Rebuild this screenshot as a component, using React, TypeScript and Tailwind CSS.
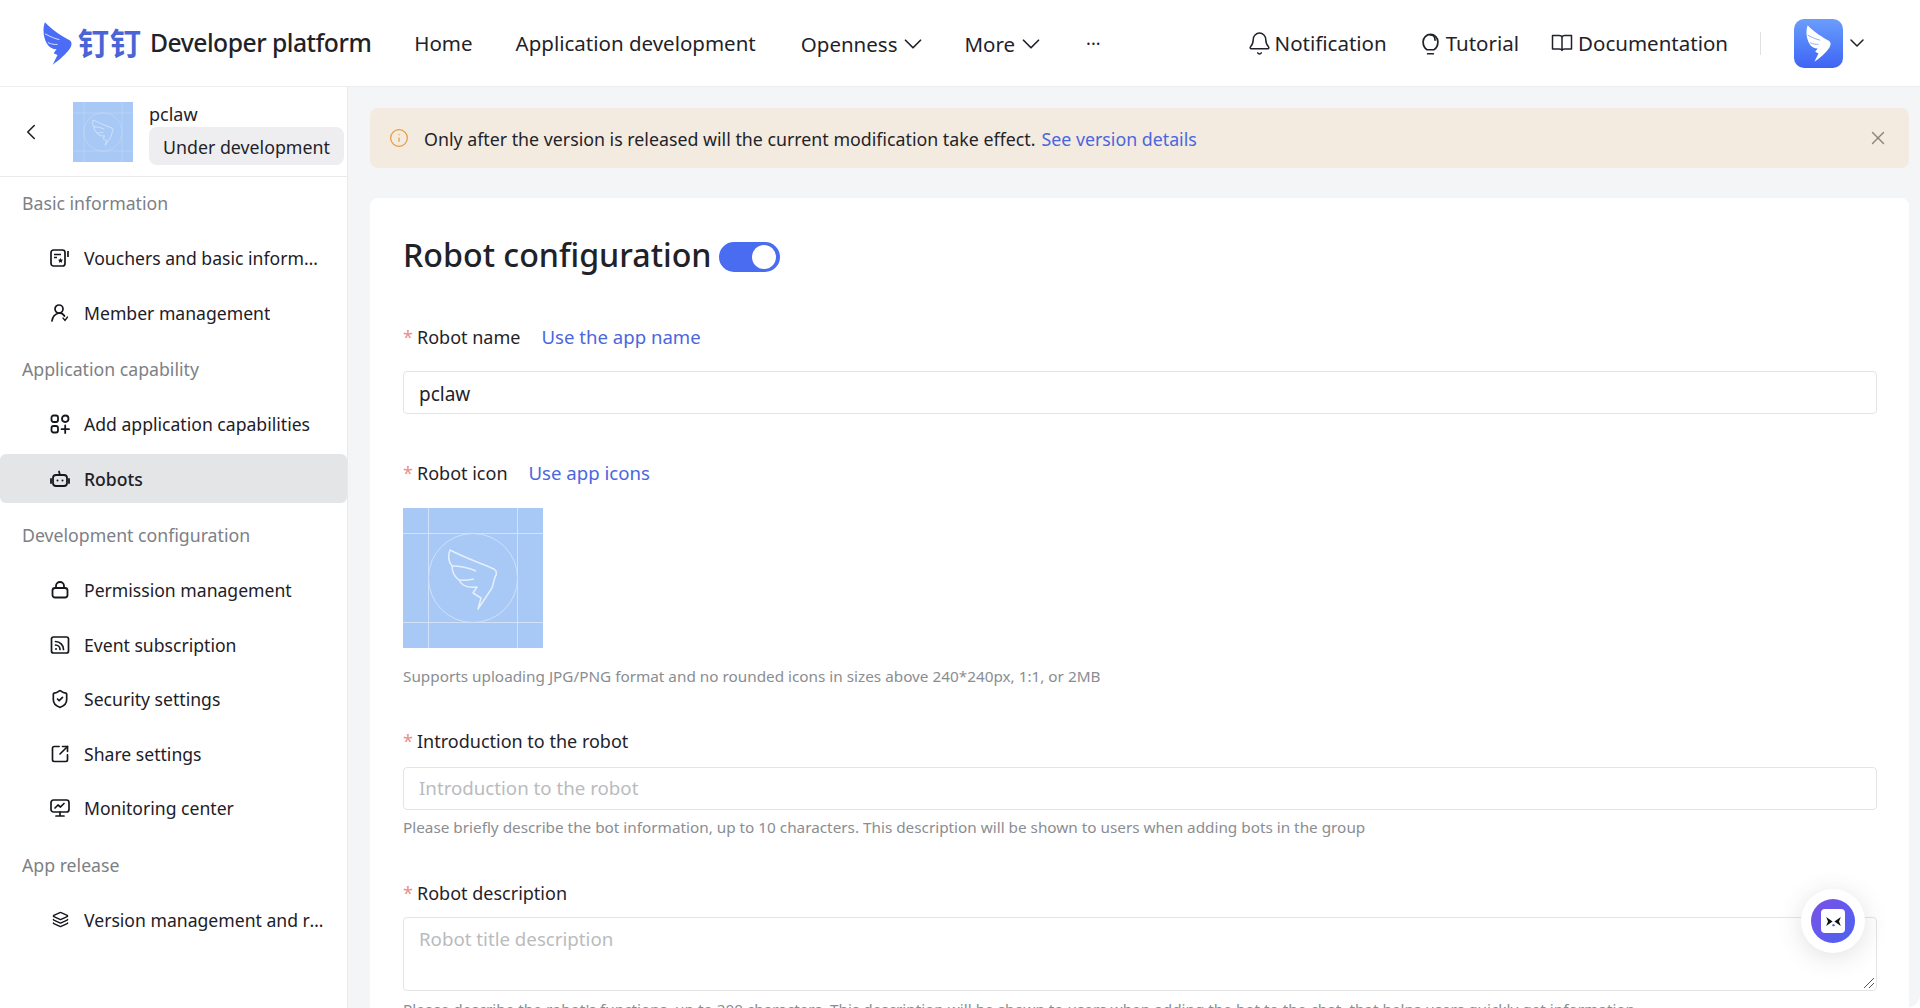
import { Bell, ChevronDown, ChevronLeft, Info, Layers, ShieldCheck, SquareArrowOutUpRight, X } from 'lucide-react';
import type { ReactNode } from 'react';

const Wing = ({ className, notch }: { className?: string; notch: string }) => (
  <svg viewBox="0 0 30 44" className={className}>
    <path
      d="M2 0 C9 8 21 15 28 19 C30 21 30 24 28 27 C24 33 17 39 10 44 L15 34 L11 32 L14 28 C10 28 6 26 4 22 C1 17 -1 8 2 0 Z"
      fill="currentColor"
    />
    <path d="M2 12 C8 15 12 17 17 18M5 21 C9 23 12 23 15 23" fill="none" stroke={notch} strokeWidth="0.800" />
  </svg>
);

const Vouchers = () => (
  <svg viewBox="0 0 20 20" className="h-5 w-5" fill="none" stroke="currentColor" strokeWidth="1.700">
    <rect x="1" y="2" width="14" height="16" rx="2.500" />
    <path d="M4 6.500h7M4 9.500h3" />
    <path d="M10.500 10l.8 1.600 1.700.2-1.200 1.200.3 1.700-1.600-.8-1.600.8.3-1.700-1.200-1.200 1.700-.2z" fill="currentColor" stroke="none" />
    <path d="M18 3v6" />
  </svg>
);

const Member = () => (
  <svg viewBox="0 0 20 20" className="h-5 w-5" fill="none" stroke="currentColor" strokeWidth="1.700" strokeLinecap="round">
    <circle cx="9" cy="6" r="4" />
    <path d="M2 18c.5-4.500 3-7 7-8 2.500 0 4.500 1 5.500 3" />
    <path d="M13 15l2 2.500 2.500-3.500" strokeWidth="1.300" />
  </svg>
);

const AddApp = () => (
  <svg viewBox="0 0 20 20" className="h-5 w-5" fill="none" stroke="currentColor" strokeWidth="1.800" strokeLinecap="round">
    <rect x="1.500" y="1.500" width="6.500" height="6.500" rx="2" />
    <rect x="12" y="1.500" width="6.500" height="6.500" rx="3.200" />
    <rect x="1.500" y="12" width="6.500" height="6.500" rx="2" />
    <path d="M15.200 11.500v7.500M11.500 15.200h7.500" />
  </svg>
);

const Robot = () => (
  <svg viewBox="0 0 20 20" className="h-5 w-5" fill="none" stroke="currentColor" strokeWidth="1.800" strokeLinecap="round">
    <rect x="3" y="6" width="14" height="11" rx="3" />
    <path d="M9 2.500L10 6M1 10v4M19 10v4" />
    <circle cx="7.500" cy="11.500" r="1" fill="currentColor" stroke="none" />
    <circle cx="12.500" cy="11.500" r="1" fill="currentColor" stroke="none" />
  </svg>
);

const Lock = () => (
  <svg viewBox="0 0 20 20" className="h-5 w-5" fill="none" stroke="currentColor" strokeWidth="1.800">
    <rect x="2.500" y="8" width="15" height="9.500" rx="2.500" />
    <path d="M6 8V6a4 4 0 0 1 8 0v2" />
  </svg>
);

const Feed = () => (
  <svg viewBox="0 0 20 20" className="h-5 w-5" fill="none" stroke="currentColor" strokeWidth="1.700" strokeLinecap="round">
    <rect x="1.500" y="2" width="17" height="16" rx="2" />
    <path d="M5.500 6.500c4.500 0 8 3.500 8 8M5.500 10c2.500 0 4.500 2 4.500 4.500" />
    <circle cx="6" cy="14" r="1" fill="currentColor" stroke="none" />
  </svg>
);

const Monitor = () => (
  <svg viewBox="0 0 20 20" className="h-5 w-5" fill="none" stroke="currentColor" strokeWidth="1.700" strokeLinecap="round" strokeLinejoin="round">
    <rect x="1" y="2" width="18" height="12" rx="2.500" />
    <path d="M5 10l3-3 2.500 2 3.500-3.500M10 14v4M6 18h8" />
  </svg>
);

const Bulb = () => (
  <svg viewBox="0 0 20 22" className="h-[25px] w-[23px]" fill="none" stroke="currentColor" strokeWidth="1.500" strokeLinecap="round">
    <path d="M7 16.500C4.500 15 3.500 12 3.500 9.500a6.500 6.500 0 0 1 13 0c0 2.500-1 5.500-3.500 7z" />
    <path d="M7.500 20h5M10 3.500c2.500 0 4 2 4 4.500" />
  </svg>
);

const Book = () => (
  <svg viewBox="0 0 22 22" className="h-[22px] w-[22px]" fill="none" stroke="currentColor" strokeWidth="1.500" strokeLinejoin="round">
    <path d="M1.500 3.500h6.500c1.500 0 3 .8 3 2v13c0-1-1.500-1.500-3-1.500H1.500zM20.500 3.500H14c-1.500 0-3 .8-3 2v13c0-1 1.500-1.500 3-1.500h6.500z" />
  </svg>
);

const Placeholder = ({ className }: { className?: string }) => (
  <svg viewBox="0 0 140 140" className={className}>
    <rect width="140" height="140" fill="#a8c8f5" />
    <g stroke="#d0e1f9" strokeWidth="1" fill="none">
      <path d="M25.500 0v140M114.500 0v140M0 25.500h140M0 114.500h140" />
      <circle cx="70" cy="70" r="44.500" />
      <g stroke="#e6effc" strokeWidth="1.500" strokeLinejoin="round">
        <path d="M47 42 C60 49 77 55 91 61 C94 63 94 66 92 69 L89 80 L75 101 L78 90 L70 85 L74 79 C66 80 59 78 56 72 C52 69 49 64 49 58 C45 53 45 47 47 42 Z" />
        <path d="M49 58 C57 58 66 60 73 63M56 72 C61 73 66 72 71 71" />
      </g>
    </g>
  </svg>
);

const NavItem = ({ icon, label, active }: { icon: ReactNode; label: string; active?: boolean }) => (
  <div className={`mb-[5.5px] flex h-[49px] items-center pl-[50px] pr-[22px] ${active ? 'rounded-[6px] bg-[#e4e5e7] font-medium' : ''}`}>
    <span className="flex w-[34px] shrink-0 items-center text-[#15171c]">{icon}</span>
    <span className="truncate pt-px text-[17.600px] text-[#1d2026]">{label}</span>
  </div>
);

const GroupLabel = ({ children }: { children: string }) => (
  <div className="mb-[6px] mt-[2px] flex h-[49px] items-center pl-[22px] pt-px text-[17.700px] text-[#7d8086]">{children}</div>
);

const Label = ({ children, link }: { children: string; link?: string }) => (
  <div className="flex items-center text-[18px] leading-[26px]">
    <span className="w-[14px] text-[#ec8f85]">*</span>
    <span className="text-[#1f2329]">{children}</span>
    {link && <a className="ml-[21px] text-[18.600px] text-[#4a66de]">{link}</a>}
  </div>
);

const Hint = ({ children }: { children: string }) => (
  <p className="whitespace-nowrap text-[15.300px] leading-[22px] text-[#8a8d92]">{children}</p>
);

export default function App() {
  return (
    <div className="h-[1008px] w-[1920px] overflow-hidden bg-white font-['Noto_Sans','Noto_Sans_CJK_SC',sans-serif]">
      <div className="relative flex h-full flex-col overflow-hidden rounded-[14px] bg-white">
        {/* Top bar */}
        <header className="flex h-[87px] shrink-0 items-center border-b border-[#eceded] pl-[43px] pr-[51px] text-[#1f2329]">
          <Wing className="h-[43px] w-[29px] text-[#4a6cf7]" notch="#ffffff" />
          <span className="ml-[6px] text-[31px] font-bold leading-none tracking-[1px] text-[#4a64d8]">钉钉</span>
          <span className="ml-[8px] text-[24.700px] font-medium tracking-[-0.5px]">Developer platform</span>
          <nav className="ml-[43px] flex items-center text-[20.500px]">
            <span>Home</span>
            <span className="ml-[43px]">Application development</span>
            <span className="ml-[45px] mt-[2px] flex items-center gap-px">Openness <ChevronDown className="h-[30px] w-[30px]" strokeWidth={1.4} /></span>
            <span className="ml-[36px] mt-[2px] flex items-center gap-px">More <ChevronDown className="h-[30px] w-[30px]" strokeWidth={1.4} /></span>
            <span className="ml-[40px] text-[18px]">···</span>
          </nav>
          <div className="ml-auto flex items-center text-[20.500px]">
            <Bell className="h-[25px] w-[25px]" strokeWidth={1.4} />
            <span className="ml-[3px]">Notification</span>
            <span className="ml-[32px]"><Bulb /></span>
            <span className="ml-[4px]">Tutorial</span>
            <span className="ml-[32px]"><Book /></span>
            <span className="ml-[5px]">Documentation</span>
            <div className="ml-[32px] h-[23px] w-px bg-[#dfe0e2]" />
            <div className="ml-[33px] flex h-[49px] w-[49px] items-center justify-center rounded-[10px] bg-gradient-to-b from-[#6b9dfb] to-[#3f63f5]">
              <Wing className="h-[37px] w-[25px] text-white" notch="#5d87f8" />
            </div>
            <ChevronDown className="ml-[2px] h-[24px] w-[24px]" strokeWidth={1.5} />
          </div>
        </header>

        <div className="flex min-h-0 flex-1">
          {/* Sidebar */}
          <aside className="w-[348px] shrink-0 border-r border-[#e9eaeb] bg-white">
            <div className="flex h-[90px] items-center border-b border-[#e9eaeb]">
              <ChevronLeft className="ml-[18px] h-[26px] w-[26px] text-[#1f2329]" strokeWidth={1.5} />
              <Placeholder className="ml-[29px] h-[60px] w-[60px]" />
              <div className="ml-[16px] flex flex-col pt-[2px]">
                <span className="text-[18px] leading-[26px] text-[#1f2329]">pclaw</span>
                <span className="flex h-[38px] w-[195px] items-center whitespace-nowrap rounded-[8px] bg-[#eeeef0] pl-[14px] pt-[3px] text-[17.800px] text-[#1f2329]">Under development</span>
              </div>
            </div>
            <div className="-mt-[0.5px] flex flex-col">
              <GroupLabel>Basic information</GroupLabel>
              <NavItem icon={<Vouchers />} label="Vouchers and basic information" />
              <NavItem icon={<Member />} label="Member management" />
              <GroupLabel>Application capability</GroupLabel>
              <NavItem icon={<AddApp />} label="Add application capabilities" />
              <NavItem icon={<Robot />} label="Robots" active />
              <GroupLabel>Development configuration</GroupLabel>
              <NavItem icon={<Lock />} label="Permission management" />
              <NavItem icon={<Feed />} label="Event subscription" />
              <NavItem icon={<ShieldCheck className="h-5 w-5" strokeWidth={2} />} label="Security settings" />
              <NavItem icon={<SquareArrowOutUpRight className="h-5 w-5" strokeWidth={2} />} label="Share settings" />
              <NavItem icon={<Monitor />} label="Monitoring center" />
              <GroupLabel>App release</GroupLabel>
              <NavItem icon={<Layers className="ml-[2px] h-[17px] w-[17px]" strokeWidth={2} />} label="Version management and release" />
            </div>
          </aside>

          {/* Main */}
          <main className="min-w-0 flex-1 bg-[#f3f5f7] pl-[22px] pr-[11px] pt-[21px]">
            <div className="flex h-[60px] items-center rounded-[8px] bg-[#f3ebe0] pl-[19px] pr-[20px] text-[17.800px] text-[#1f2329]">
              <Info className="h-5 w-5 text-[#e79a3c]" strokeWidth={1.5} />
              <span className="ml-[15px] pt-[2px]">Only after the version is released will the current modification take effect.</span>
              <a className="ml-[6px] pt-[2px] text-[#4a66de]">See version details</a>
              <X className="ml-auto h-[22px] w-[22px] text-[#85817b]" strokeWidth={1.5} />
            </div>

            <div className="mt-[30px] h-[820px] rounded-[8px] bg-white pl-[33px] pr-[32px] pt-[33px]">
              <div className="flex items-center">
                <h1 className="text-[32.200px] font-medium leading-[48px] text-[#1f2329]">Robot configuration</h1>
                <div className="ml-[7px] mt-[4px] flex h-[30px] w-[61px] items-center justify-end rounded-full bg-[#4a6cf0] pr-[4px]">
                  <div className="h-[24px] w-[24px] rounded-full bg-white" />
                </div>
              </div>

              <div className="mt-[45px]">
                <Label link="Use the app name">Robot name</Label>
              </div>
              <div className="mt-[21px] flex h-[43px] items-center rounded-[4px] border border-[#e3e4e6] pl-[15px] pt-[3px] text-[19px] text-[#1f2329]">pclaw</div>

              <div className="mt-[46px]">
                <Label link="Use app icons">Robot icon</Label>
              </div>
              <Placeholder className="mt-[22px] h-[140px] w-[140px]" />
              <div className="mt-[17px]"><Hint>Supports uploading JPG/PNG format and no rounded icons in sizes above 240*240px, 1:1, or 2MB</Hint></div>

              <div className="mt-[41px]"><Label>Introduction to the robot</Label></div>
              <div className="mt-[13px] flex h-[43px] items-center rounded-[4px] border border-[#e3e4e6] pl-[15px] text-[18.700px] text-[#b9bbbe]">Introduction to the robot</div>
              <div className="mt-[6px]"><Hint>Please briefly describe the bot information, up to 10 characters. This description will be shown to users when adding bots in the group</Hint></div>

              <div className="mt-[42px]"><Label>Robot description</Label></div>
              <div className="relative mt-[11px] h-[74px] rounded-[4px] border border-[#e3e4e6] pl-[15px] pt-[7px] text-[18.700px] text-[#b9bbbe]">
                Robot title description
                <svg viewBox="0 0 12 12" className="absolute bottom-[1px] right-[1px] h-3 w-3" stroke="#555" fill="none">
                  <path d="M1 11L11 1M6 11l5-5" />
                </svg>
              </div>
              <div className="mt-[7px]"><Hint>Please describe the robot's functions, up to 200 characters. This description will be shown to users when adding the bot to the chat, that helps users quickly get information</Hint></div>
            </div>
          </main>
        </div>

        {/* Floating assistant */}
        <div className="absolute left-[1801px] top-[889px] flex h-[64px] w-[64px] items-center justify-center rounded-full bg-white shadow-[0_4px_24px_rgba(60,70,90,0.16)]">
          <div className="flex h-[44px] w-[44px] items-center justify-center rounded-full bg-gradient-to-br from-[#7c4fe6] to-[#4363f2]">
            <div className="flex h-[24px] w-[24px] items-center justify-center rounded-[4px] bg-white">
              <svg viewBox="0 0 18 12" className="h-[11px] w-[17px]">
                <path d="M1 1l7 5-7 5 2-5zM17 1l-7 5 7 5-2-5z" fill="#111" />
                <circle cx="9" cy="10" r="1.300" fill="#4a6cf0" />
              </svg>
            </div>
          </div>
        </div>
      </div>
    </div>
  );
}
